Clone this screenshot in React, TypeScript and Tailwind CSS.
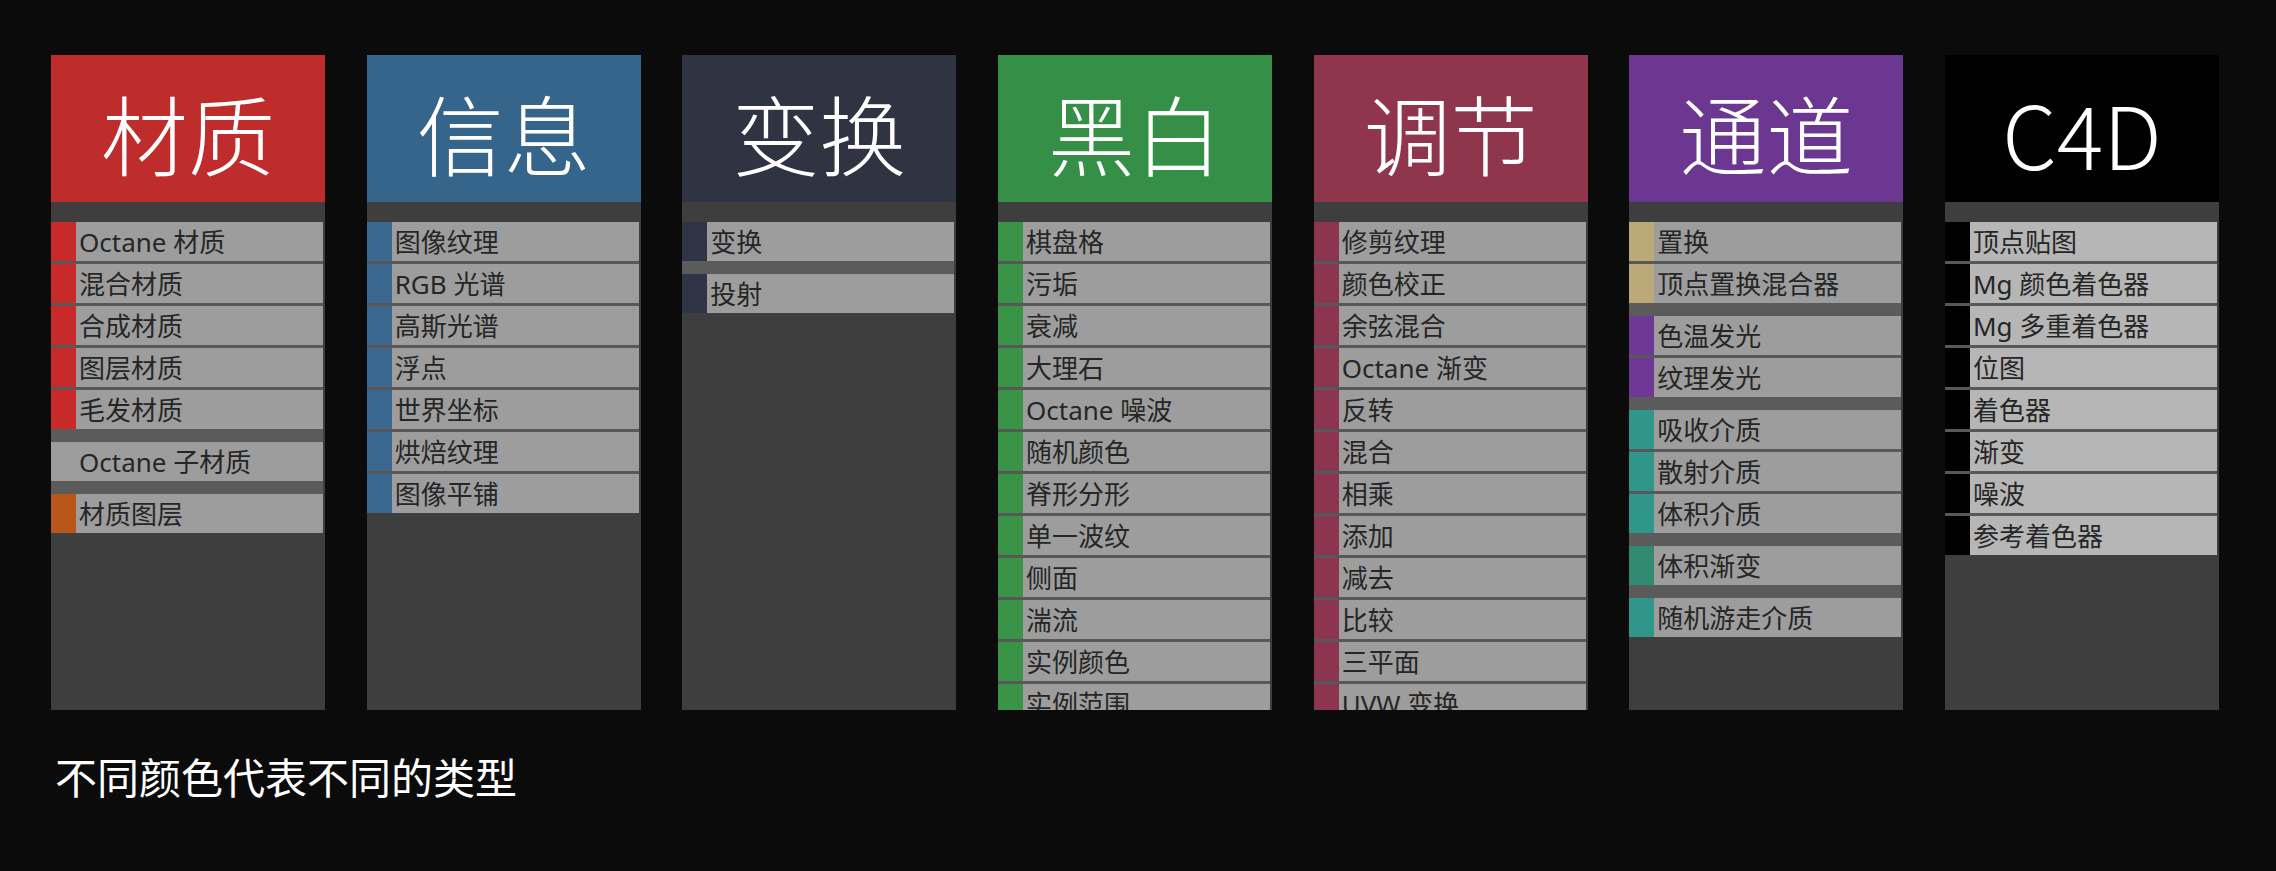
import React from 'react';

type Group = {
    swatch: string | null;
    items: string[];
};

interface NodeColumn {
    title: string;
    header: string;
    rowBg: string;
    groups: Group[];
}

const columns: NodeColumn[] = [
    {
        title: '材质',
        header: 'bg-[#bf2c2c]',
        rowBg: 'bg-[#9d9d9d]',
        groups: [
            { swatch: 'bg-[#c82a2a]', items: ['Octane 材质', '混合材质', '合成材质', '图层材质', '毛发材质'] },
            { swatch: null, items: ['Octane 子材质'] },
            { swatch: 'bg-[#b9561a]', items: ['材质图层'] },
        ],
    },
    {
        title: '信息',
        header: 'bg-[#36658b]',
        rowBg: 'bg-[#9d9d9d]',
        groups: [
            { swatch: 'bg-[#3a6890]', items: ['图像纹理', 'RGB 光谱', '高斯光谱', '浮点', '世界坐标', '烘焙纹理', '图像平铺'] },
        ],
    },
    {
        title: '变换',
        header: 'bg-[#2f3342]',
        rowBg: 'bg-[#9d9d9d]',
        groups: [
            { swatch: 'bg-[#2f3447]', items: ['变换'] },
            { swatch: 'bg-[#2f3447]', items: ['投射'] },
        ],
    },
    {
        title: '黑白',
        header: 'bg-[#358f46]',
        rowBg: 'bg-[#9d9d9d]',
        groups: [
            {
                swatch: 'bg-[#3a9448]',
                items: ['棋盘格', '污垢', '衰减', '大理石', 'Octane 噪波', '随机颜色', '脊形分形', '单一波纹', '侧面', '湍流', '实例颜色', '实例范围'],
            },
        ],
    },
    {
        title: '调节',
        header: 'bg-[#8f364d]',
        rowBg: 'bg-[#9d9d9d]',
        groups: [
            {
                swatch: 'bg-[#8d3450]',
                items: ['修剪纹理', '颜色校正', '余弦混合', 'Octane 渐变', '反转', '混合', '相乘', '添加', '减去', '比较', '三平面', 'UVW 变换'],
            },
        ],
    },
    {
        title: '通道',
        header: 'bg-[#6b3790]',
        rowBg: 'bg-[#9d9d9d]',
        groups: [
            { swatch: 'bg-[#bba979]', items: ['置换', '顶点置换混合器'] },
            { swatch: 'bg-[#6e3896]', items: ['色温发光', '纹理发光'] },
            { swatch: 'bg-[#31968a]', items: ['吸收介质', '散射介质', '体积介质'] },
            { swatch: 'bg-[#2f8a6f]', items: ['体积渐变'] },
            { swatch: 'bg-[#31968a]', items: ['随机游走介质'] },
        ],
    },
    {
        title: 'C4D',
        header: 'bg-black',
        rowBg: 'bg-[#b6b6b6]',
        groups: [
            { swatch: 'bg-black', items: ['顶点贴图', 'Mg 颜色着色器', 'Mg 多重着色器', '位图', '着色器', '渐变', '噪波', '参考着色器'] },
        ],
    },
];

const NodeRow = ({ label, swatch, rowBg, first }: { label: string; swatch: string | null; rowBg: string; first: boolean }) => (
    <div className={`flex h-[39px] shrink-0 ${first ? '' : 'mt-[3px]'}`}>
        <div className={`w-[25px] shrink-0 ${swatch ?? rowBg}`} />
        <div className={`flex flex-1 items-center pl-[3px] ${rowBg}`}>
            <span className="text-[26px] leading-none text-[#262626] whitespace-nowrap [font-family:'Noto_Sans','Noto_Sans_CJK_SC',sans-serif]">
                {label}
            </span>
        </div>
    </div>
);

const Column = ({ col }: { col: NodeColumn }) => (
    <div className="w-[274px] h-[655px] shrink-0 bg-[#3e3e3e] flex flex-col overflow-hidden">
        <div className={`h-[147px] shrink-0 flex items-center justify-center pt-[8px] ${col.header}`}>
            <span className="text-white text-[87px] font-light leading-none [font-family:'Noto_Sans_CJK_SC',sans-serif]">
                {col.title}
            </span>
        </div>
        <div className="h-[20px] shrink-0" />
        {col.groups.map((g, gi) => (
            <div
                key={gi}
                className={`flex flex-col shrink-0 mr-[2px] bg-[#585858] ${gi > 0 ? 'border-t-[13px] border-[#5b5b5b]' : ''}`}
            >
                {g.items.map((item, i) => (
                    <NodeRow key={item} label={item} swatch={g.swatch} rowBg={col.rowBg} first={i === 0} />
                ))}
            </div>
        ))}
    </div>
);

const App = () => {
    return (
        <div className="w-[2276px] h-[871px] bg-[#0b0b0b] overflow-hidden">
            <div className="flex gap-[41.67px] pl-[51px] pt-[55px]">
                {columns.map((col) => (
                    <Column key={col.title} col={col} />
                ))}
            </div>
            <p className="mt-[45px] pl-[55px] text-white text-[42px] leading-none [font-family:'Noto_Sans_CJK_SC',sans-serif]">
                不同颜色代表不同的类型
            </p>
        </div>
    );
};

export default App;
